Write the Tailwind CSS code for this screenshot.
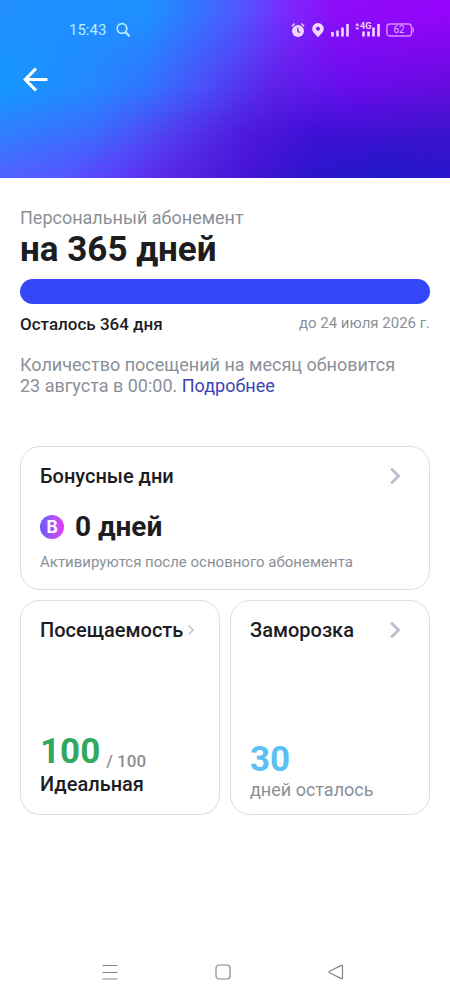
<!DOCTYPE html>
<html lang="ru">
<head>
<meta charset="utf-8">
<meta name="viewport" content="width=device-width, initial-scale=1">
<title>Персональный абонемент</title>
<script src="https://cdn.jsdelivr.net/npm/@tailwindcss/browser@4"></script>
</head>
<body class="flex min-h-screen flex-col bg-white font-['Roboto',sans-serif] text-[#1d1d1f]">
  <header class="relative h-[178px] bg-[linear-gradient(90deg,#2490ff_0%,#1e90ff_10%,#2090ff_33%,#3078ff_42%,#5058ff_53%,#7c28fc_64%,#8c0cf8_75%,#9604fb_100%)]">
    <!-- Mesh background: each layer fades in over the one above it -->
    <div class="absolute inset-0 bg-[linear-gradient(90deg,#1498ff_0%,#2488ff_20%,#3272ff_33%,#4a4ff8_45%,#5c22e8_60%,#680cec_78%,#640cdc_100%)] [mask-image:linear-gradient(transparent_8%,black_50%)]"></div>
    <div class="absolute inset-0 bg-[linear-gradient(90deg,#327eff_0%,#3b6cfd_20%,#4a54f8_30%,#5238ec_40%,#4e18dc_55%,#3f10d6_70%,#3c14cc_100%)] [mask-image:linear-gradient(transparent_50%,black_75%)]"></div>
    <div class="absolute inset-0 bg-[linear-gradient(90deg,#4e64ff_0%,#5556ff_15%,#5a3cf8_27%,#5a28e8_37%,#4614d4_55%,#2c16cc_70%,#2218c8_85%,#2a14cc_100%)] [mask-image:linear-gradient(transparent_75%,black_98%)]"></div>
    <div class="relative flex items-center justify-between pt-5 pr-9 pl-[69px]">
      <div class="flex h-5 items-center gap-2.5 text-[#b8ecff]">
        <time class="pt-px text-[15px]">15:43</time>
        <svg class="size-4" viewBox="0 0 16 16" fill="none" stroke="currentColor" stroke-width="1.7" aria-hidden="true"><circle cx="6" cy="6.500" r="4.800"/><path d="M9.300 10l4.300 4.300" stroke-width="2.200"/></svg>
      </div>
      <div class="flex h-5 items-center gap-1.5 text-[#f1d6ff]">
        <svg class="h-4 w-3.5" viewBox="0 0 14 16" aria-hidden="true"><circle cx="7" cy="8.900" r="6" fill="currentColor"/><path d="M.8 4.200L3.700 1.600M13.200 4.200l-2.900-2.600" stroke="currentColor" stroke-width="1.300"/><path d="M6.800 5.500v3.600l2.100 1.700" stroke="#7c2be8" stroke-width="1.300" fill="none"/></svg>
        <svg class="h-4 w-3.5" viewBox="0 0 14 16" aria-hidden="true"><path fill="currentColor" fill-rule="evenodd" d="M7 1a5.700 5.700 0 0 0-5.800 5.700c0 3.500 3.500 5.600 5.800 8.600 2.300-3 5.800-5.100 5.800-8.600A5.700 5.700 0 0 0 7 1zm0 3.700a2 2 0 1 1 0 4 2 2 0 0 1 0-4z"/></svg>
        <svg class="h-4 w-[18px]" viewBox="0 0 18 16" stroke="currentColor" stroke-width="2.600" aria-hidden="true"><path d="M1.500 14.500v-4.500M6.500 14.500V8.500M11.500 14.500V5.500M16.500 14.500V2"/></svg>
        <div class="relative h-4 w-[25px]">
          <svg class="size-full" viewBox="0 0 25 16" aria-hidden="true"><path d="M8.500 14.500V9.500M13.500 14.500V9.500M18.500 14.500V5.500M23.500 14.500V2" stroke="currentColor" stroke-width="2.600"/><path d="M.3 3.800L2.300 1l2 2.800zM.3 5.500h4L2.300 8z" fill="currentColor"/></svg>
          <span class="absolute -top-px left-[5px] text-[9px] leading-[10px] font-bold">4G</span>
        </div>
        <div class="relative h-4 w-[28px]">
          <svg class="size-full" viewBox="0 0 28 16" fill="none" stroke="#d88cff" aria-hidden="true"><rect x=".9" y="2" width="24.600" height="12" rx="3" stroke-width="1.400"/><path d="M27.200 5.500v5" stroke-width="1.400"/></svg>
          <span class="absolute inset-y-0 left-0 w-[26px] text-center text-[10px] leading-4 text-[#e6b3ff]">62</span>
        </div>
      </div>
    </div>
    <button type="button" aria-label="Назад" class="relative mt-6 ml-5 flex size-8 items-center justify-center text-white">
      <svg class="size-7" viewBox="0 0 28 28" fill="none" stroke="currentColor" stroke-width="3.200" aria-hidden="true"><path d="M25.500 13.500H4M14 2.500L3.300 13.500l10.700 11"/></svg>
    </button>
  </header>

  <main class="flex-1 px-5 pt-7">
    <p class="text-lg leading-6 text-[#8b8f98]">Персональный абонемент</p>
    <h1 class="pt-0.5 text-[35px] leading-9 font-bold">на 365 дней</h1>
    <div role="progressbar" aria-label="Осталось дней" aria-valuemin="0" aria-valuemax="365" aria-valuenow="364" class="mt-[11px] h-[25px] rounded-full bg-[#3447f8]"></div>
    <div class="mt-2 flex justify-between">
      <p class="text-[17px] leading-6 font-medium">Осталось 364 дня</p>
      <p class="pt-px text-[15px] leading-5 text-[#8b8f98]">до 24 июля 2026 г.</p>
    </div>
    <p class="mt-[18px] text-lg leading-[21px] text-[#8b8f98]">Количество посещений на месяц обновится<br>23 августа в 00:00. <a href="#details" class="text-[#3c45b4]">Подробнее</a></p>

    <section class="mt-[50px] rounded-[20px] border border-[#dddde2] px-[19px] pt-[17px] pb-[17px]">
      <a href="#bonus" class="flex items-center justify-between pr-2">
        <h2 class="text-xl leading-6 font-medium">Бонусные дни</h2>
        <svg class="h-4 w-3" viewBox="0 0 12 16" fill="none" stroke="#bdbdcb" stroke-width="2.800" stroke-linecap="round" aria-hidden="true"><path d="M2 1.500L8.500 8 2 14.500"/></svg>
      </a>
      <div class="mt-[23px] flex items-center gap-[11px]">
        <span class="flex size-6 items-center justify-center rounded-full bg-linear-to-r from-[#6558fb] to-[#e23df2] font-['Inter',sans-serif] text-[17px] leading-6 font-bold text-white">B</span>
        <p class="text-[28px] leading-8 font-bold">0 дней</p>
      </div>
      <p class="mt-2 pt-px text-[15px] leading-5 text-[#8b8f98]">Активируются после основного абонемента</p>
    </section>

    <div class="mt-2.5 grid grid-cols-2 gap-2.5">
      <section class="flex h-[215px] flex-col justify-between rounded-[20px] border border-[#dddde2] px-[19px] pt-[17px] pb-[18px]">
        <a href="#attendance" class="flex items-center gap-1">
          <h2 class="text-xl leading-6 font-medium">Посещаемость</h2>
          <svg class="h-4 w-2 shrink-0" viewBox="0 0 8 16" fill="none" stroke="#bdbdcb" stroke-width="1.400" stroke-linecap="round" aria-hidden="true"><path d="M2 4l4 4-4 4"/></svg>
        </a>
        <div>
          <p class="flex items-end gap-1.5"><span class="text-[35px] leading-10 font-bold text-[#32a85f]">100</span><span class="text-[17px] leading-[22px] font-medium text-[#8b8f98]">/ 100</span></p>
          <p class="text-xl leading-6 font-medium">Идеальная</p>
        </div>
      </section>
      <section class="flex h-[215px] flex-col justify-between rounded-[20px] border border-[#dddde2] px-[19px] pt-[17px] pb-3">
        <a href="#freeze" class="flex items-center justify-between pr-2">
          <h2 class="text-xl leading-6 font-medium">Заморозка</h2>
          <svg class="h-4 w-3" viewBox="0 0 12 16" fill="none" stroke="#bdbdcb" stroke-width="2.800" stroke-linecap="round" aria-hidden="true"><path d="M2 1.500L8.500 8 2 14.500"/></svg>
        </a>
        <div>
          <p class="text-[35px] leading-9 font-bold text-[#5cc0f2]">30</p>
          <p class="text-lg leading-6 text-[#8b8f98]">дней осталось</p>
        </div>
      </section>
    </div>
  </main>

  <nav aria-label="Системная навигация" class="flex justify-around pr-[58px] pb-4 pl-[54px] text-[#858585]">
    <button type="button" aria-label="Недавние" class="flex size-6 items-center justify-center"><svg class="size-4" viewBox="0 0 16 16" stroke="currentColor" stroke-width="1.200" aria-hidden="true"><path d="M.5 1.500h15M.5 8.500h15M.5 15h15"/></svg></button>
    <button type="button" aria-label="Домой" class="flex size-6 items-center justify-center"><svg class="size-4" viewBox="0 0 16 16" fill="none" stroke="currentColor" stroke-width="1.200" aria-hidden="true"><rect x="1" y="1" width="14" height="14" rx="3"/></svg></button>
    <button type="button" aria-label="Назад в системе" class="flex size-6 items-center justify-center"><svg class="size-4" viewBox="0 0 16 16" fill="none" stroke="currentColor" stroke-width="1.200" stroke-linejoin="round" aria-hidden="true"><path d="M13.300 1.400L1.600 7.300q-1 .7 0 1.400l11.700 5.900q1.200.4 1.200-.8V2.200q0-1.200-1.200-.8z"/></svg></button>
  </nav>
</body>
</html>
